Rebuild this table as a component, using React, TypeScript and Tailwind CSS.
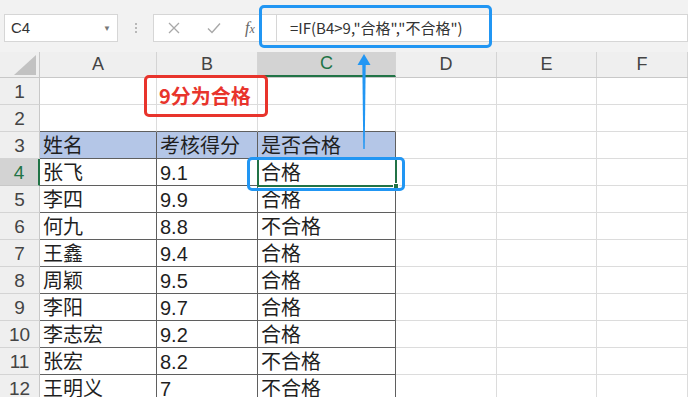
import React from 'react';

const FONT = { fontFamily: '"Liberation Sans", "Noto Sans CJK SC", sans-serif' };
const CJK = { fontFamily: '"Noto Sans CJK SC", sans-serif' };

const cols = ['A', 'B', 'C', 'D', 'E', 'F'];
const colWidths = ['w-[117px]', 'w-[101px]', 'w-[138px]', 'w-[101px]', 'w-[100px]', 'flex-1'];

const rows: string[][] = [
  ['', '', '', '', '', ''],
  ['', '', '', '', '', ''],
  ['姓名', '考核得分', '是否合格', '', '', ''],
  ['张飞', '9.1', '合格', '', '', ''],
  ['李四', '9.9', '合格', '', '', ''],
  ['何九', '8.8', '不合格', '', '', ''],
  ['王鑫', '9.4', '合格', '', '', ''],
  ['周颖', '9.5', '合格', '', '', ''],
  ['李阳', '9.7', '合格', '', '', ''],
  ['李志宏', '9.2', '合格', '', '', ''],
  ['张宏', '8.2', '不合格', '', '', ''],
  ['王明义', '7', '不合格', '', '', ''],
];

// A3:C12 is the bordered table
const inTable = (r: number, c: number) => r >= 3 && c <= 2;

function Cell({ text, r, c }: { text: string; r: number; c: number }) {
  const table = inTable(r, c);
  const bottomDark = table || (r === 2 && c <= 2);
  return (
    <div
      className={`${colWidths[c]} h-full shrink-0 border-r border-b flex items-end pl-[3px] text-[20px] leading-[23px] text-[#1f1f1f] overflow-hidden whitespace-nowrap ${
        r === 3 && c <= 2 ? 'bg-[#b4c6e7]' : 'bg-white'
      } ${table ? 'border-r-[#5f5f5f]' : 'border-r-[#dcdcdc]'} ${
        bottomDark ? 'border-b-[#5f5f5f]' : 'border-b-[#dcdcdc]'
      }`}
    >
      {text}
    </div>
  );
}

export default function App() {
  return (
    <div className="relative w-[688px] h-[397px] overflow-hidden bg-white" style={FONT}>
      {/* name box + formula bar */}
      <div className="h-[52px] bg-[#f2f2f2] flex items-start pt-[14px] pl-[4px]">
        <div className="w-[114px] h-[28px] bg-white border border-[#d6d6d6] flex items-center justify-between px-[6px]">
          <span className="text-[15px] text-[#333]">C4</span>
          <span className="text-[8px] text-[#777] mt-[2px]">▼</span>
        </div>
        <div className="w-[35px] h-[28px] flex flex-col items-center justify-center gap-[2px]">
          <span className="w-[2px] h-[2px] bg-[#b8b8b8]" />
          <span className="w-[2px] h-[2px] bg-[#b8b8b8]" />
          <span className="w-[2px] h-[2px] bg-[#b8b8b8]" />
        </div>
        <div className="w-[123px] h-[28px] bg-white border border-[#d6d6d6] border-r-0 flex items-center">
          <svg width="14" height="14" viewBox="0 0 14 14" className="ml-[13px]">
            <path d="M2 2 L12 12 M12 2 L2 12" stroke="#a8a8a8" strokeWidth="1.3" fill="none" />
          </svg>
          <svg width="16" height="14" viewBox="0 0 16 14" className="ml-[25px]">
            <path d="M2 7.5 L6 11.5 L14 2.5" stroke="#a8a8a8" strokeWidth="1.4" fill="none" />
          </svg>
          <span
            className="ml-[23px] text-[16px] italic text-[#666]"
            style={{ fontFamily: '"Liberation Serif", serif' }}
          >
            f<span className="text-[12px]">x</span>
          </span>
        </div>
        <div className="flex-1 h-[28px] bg-white border border-[#d6d6d6] flex items-center pl-[13px]">
          <span className="text-[15px] text-[#333]" style={CJK}>
            =IF(B4&gt;9,"合格","不合格")
          </span>
        </div>
      </div>

      {/* column headers */}
      <div className="h-[26px] flex bg-[#efefef] border-b border-[#c8c8c8]">
        <div className="w-[40px] shrink-0 h-full border-r border-[#c8c8c8] flex items-end justify-end pr-[3px] pb-[2px]">
          <svg width="22" height="20" viewBox="0 0 22 20">
            <polygon points="22,0 22,20 0,20" fill="#c2c2c2" />
          </svg>
        </div>
        {cols.map((c, i) => (
          <div
            key={c}
            className={`${colWidths[i]} shrink-0 h-full border-r border-[#d4d4d4] flex items-center justify-center text-[18px] ${
              c === 'C' ? 'bg-[#d3d3d3] text-[#217346] border-b-2 border-b-[#217346]' : 'text-[#444]'
            }`}
          >
            {c}
          </div>
        ))}
      </div>

      {/* sheet rows */}
      {rows.map((row, ri) => {
        const r = ri + 1;
        const active = r === 4;
        return (
          <div key={r} className="h-[27px] flex">
            <div
              className={`w-[40px] shrink-0 h-full border-b flex items-end justify-center text-[19px] leading-[24px] ${
                active
                  ? 'bg-[#d3d3d3] text-[#217346] border-r-2 border-r-[#217346] border-b-[#c8c8c8]'
                  : 'bg-[#efefef] text-[#444] border-r border-r-[#c8c8c8] border-b-[#d4d4d4]'
              }`}
            >
              {r}
            </div>
            {row.map((t, ci) => (
              <Cell key={ci} text={t} r={r} c={ci} />
            ))}
          </div>
        );
      })}

      {/* active cell C4 */}
      <div className="absolute left-[257px] top-[158px] w-[140px] h-[29px] border-2 border-[#217346]" />
      <div className="absolute left-[393px] top-[183px] w-[6px] h-[6px] bg-[#217346] border border-white" />

      {/* callouts */}
      <div className="absolute left-[144px] top-[75px] w-[124px] h-[42px] border-[3px] border-[#e8342c] rounded-[5px] flex items-center pl-[12px]">
        <span className="text-[20px] font-bold text-[#e8342c]" style={CJK}>
          9分为合格
        </span>
      </div>
      <div className="absolute left-[259px] top-[5px] w-[233px] h-[43px] border-[3px] border-[#2196f3] rounded-[5px]" />
      <div className="absolute left-[247px] top-[157px] w-[158px] h-[34px] border-[3px] border-[#2196f3] rounded-[5px]" />
      <svg className="absolute left-[356px] top-[53px]" width="16" height="98" viewBox="0 0 16 98">
        <polygon points="8,1 1.5,12 14.5,12" fill="#2196f3" />
        <polygon points="6.3,11 9.7,11 8.7,96 7.3,96" fill="#2196f3" />
      </svg>
    </div>
  );
}
